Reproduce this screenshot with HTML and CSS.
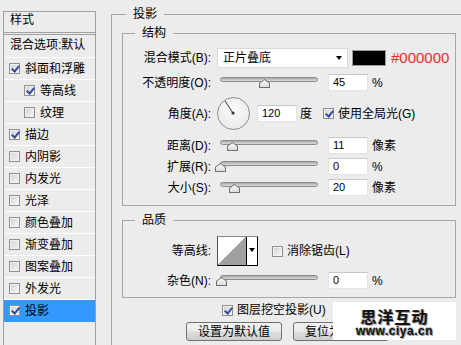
FILE: index.html
```html
<!DOCTYPE html>
<html lang="zh-CN">
<head>
    <meta charset="UTF-8">
    <title>图层样式 - 投影</title>
    <link rel="stylesheet" href="styles.css">
</head>
<body>
    <div class="dialog">
        <aside class="styles-list">
            <div class="list-head">样式</div>
            <div class="list-row blend">混合选项:默认</div>
            <div class="list-row"><span class="cb checked"></span>斜面和浮雕</div>
            <div class="list-row sub"><span class="cb checked"></span>等高线</div>
            <div class="list-row sub"><span class="cb"></span>纹理</div>
            <div class="list-row"><span class="cb checked"></span>描边</div>
            <div class="list-row"><span class="cb"></span>内阴影</div>
            <div class="list-row"><span class="cb"></span>内发光</div>
            <div class="list-row"><span class="cb"></span>光泽</div>
            <div class="list-row"><span class="cb"></span>颜色叠加</div>
            <div class="list-row"><span class="cb"></span>渐变叠加</div>
            <div class="list-row"><span class="cb"></span>图案叠加</div>
            <div class="list-row"><span class="cb"></span>外发光</div>
            <div class="list-row active"><span class="cb checked"></span>投影</div>
        </aside>

        <main class="panel">
            <fieldset class="group outer">
                <legend>投影</legend>

                <fieldset class="group section structure">
                    <legend>结构</legend>

                    <div class="row row-blend">
                        <span class="lbl">混合模式(B):</span>
                        <div class="select">正片叠底<span class="caret"></span></div>
                        <span class="swatch"></span>
                        <span class="hex">#000000</span>
                    </div>

                    <div class="row row-opacity">
                        <span class="lbl">不透明度(O):</span>
                        <div class="slider"><span class="thumb" style="left: 38px"></span></div>
                        <span class="num">45</span>
                        <span class="unit">%</span>
                    </div>

                    <div class="row row-angle">
                        <span class="lbl">角度(A):</span>
                        <div class="dial">
                            <svg width="33" height="33" viewBox="0 0 33 33">
                                <line x1="16" y1="16" x2="8" y2="4" stroke="#333" stroke-width="1"/>
                                <circle cx="16" cy="16" r="1.6" fill="#333"/>
                            </svg>
                        </div>
                        <span class="num angle-num">120</span>
                        <span class="unit">度</span>
                        <span class="check global"><span class="cb checked"></span>使用全局光(G)</span>
                    </div>

                    <div class="row row-distance">
                        <span class="lbl">距离(D):</span>
                        <div class="slider"><span class="thumb" style="left: 6px"></span></div>
                        <span class="num">11</span>
                        <span class="unit">像素</span>
                    </div>

                    <div class="row">
                        <span class="lbl">扩展(R):</span>
                        <div class="slider"><span class="thumb" style="left: -6px"></span></div>
                        <span class="num">0</span>
                        <span class="unit">%</span>
                    </div>

                    <div class="row">
                        <span class="lbl">大小(S):</span>
                        <div class="slider"><span class="thumb" style="left: 8px"></span></div>
                        <span class="num">20</span>
                        <span class="unit">像素</span>
                    </div>
                </fieldset>

                <fieldset class="group section quality">
                    <legend>品质</legend>

                    <div class="row row-contour">
                        <span class="lbl">等高线:</span>
                        <div class="contour">
                            <span class="curve"></span>
                            <span class="drop"><span class="caret"></span></span>
                        </div>
                        <span class="check antialias"><span class="cb"></span>消除锯齿(L)</span>
                    </div>

                    <div class="row row-noise">
                        <span class="lbl">杂色(N):</span>
                        <div class="slider"><span class="thumb" style="left: -5px"></span></div>
                        <span class="num">0</span>
                        <span class="unit">%</span>
                    </div>
                </fieldset>

                <div class="check knockout"><span class="cb checked"></span>图层挖空投影(U)</div>

                <div class="buttons">
                    <button class="btn">设置为默认值</button>
                    <button class="btn">复位为默认值</button>
                </div>
            </fieldset>
        </main>

        <div class="watermark">
            <div class="wm-title">思洋互动</div>
            <div class="wm-url">www.ciya.cn</div>
        </div>
    </div>
</body>
</html>
```

FILE: styles.css
```css
* {
    margin: 0;
    padding: 0;
    box-sizing: border-box;
}

body {
    width: 461px;
    height: 345px;
    overflow: hidden;
    background: #ececec;
    font-family: "Liberation Sans", "Noto Sans CJK SC", sans-serif;
    font-size: 12px;
    line-height: 16px;
    color: #000;
}

.dialog {
    position: relative;
    display: flex;
    align-items: flex-start;
    height: 345px;
}

/* left list of styles */
.styles-list {
    flex: none;
    width: 93px;
    height: 400px;
    margin: 11px 0 0 3px;
    border: 1px solid #a0a0a0;
}

.list-head {
    height: 23px;
    padding-left: 6px;
    border-bottom: 3px double #a0a0a0;
}

.list-row {
    display: flex;
    align-items: center;
    height: 22px;
    padding-left: 5px;
    border-bottom: 1px solid #fff;
    white-space: nowrap;
}

.list-row.blend {
    height: 23px;
    padding: 0 0 2px 6px;
}

.list-row.sub {
    padding-left: 20px;
}

.list-row.active {
    background: #3399ff;
    border-bottom-color: #3399ff;
}

.list-row .cb {
    margin-right: 5px;
}

/* checkbox */
.cb {
    position: relative;
    display: inline-block;
    flex: none;
    width: 11px;
    height: 11px;
    border: 1px solid #8e8f8f;
    background: linear-gradient(135deg, #cfcfcf, #f8f8f8);
    box-shadow: inset 0 0 0 1px #f2f2f2;
}

.cb.checked::after {
    content: "";
    position: absolute;
    left: 3px;
    top: 0;
    width: 3px;
    height: 6px;
    border: solid #2f4a9e;
    border-width: 0 2px 2px 0;
    transform: rotate(40deg);
}

.check {
    display: flex;
    align-items: center;
    white-space: nowrap;
}

.check .cb {
    margin-right: 4px;
}

/* right panel */
.panel {
    flex: none;
    margin: 6px 0 0 15px;
}

.group {
    border: 1px solid #a5a5a5;
    min-width: 0;
}

.group > legend {
    margin-left: 12px;
    padding: 0 7px;
    line-height: 16px;
}

.outer {
    width: 360px;
    padding: 3px 0 30px 10px;
}

.outer > legend {
    margin-left: 4px;
}

.section {
    width: 334px;
}

.structure {
    padding: 7px 0 9px;
}

.quality {
    margin-top: 6px;
    padding: 8px 0 8px;
}

.row {
    display: flex;
    align-items: center;
    height: 17px;
    margin-top: 4px;
    white-space: nowrap;
}

.row-blend {
    height: 20px;
    margin-top: 0;
}

.row-opacity {
    margin-top: 6px;
}

.row-angle {
    height: 33px;
    margin-top: 6px;
}

.row-distance {
    margin-top: 7px;
}

.row-contour {
    height: 30px;
    margin-top: 0;
}

.row-noise {
    margin-top: 6px;
}

.lbl {
    flex: none;
    width: 88px;
    margin-right: 6px;
    text-align: right;
}

/* blend mode */
.select {
    display: flex;
    align-items: center;
    justify-content: space-between;
    width: 131px;
    height: 20px;
    padding: 0 5px 0 5px;
    background: #fff;
    border: 1px solid #d9d9d9;
}

.caret {
    width: 0;
    height: 0;
    border-left: 3.5px solid transparent;
    border-right: 3.5px solid transparent;
    border-top: 4px solid #000;
}

.swatch {
    width: 34px;
    height: 16px;
    margin-left: 4px;
    background: #000;
    border: 1px solid #9a9a9a;
}

.hex {
    margin-left: 5px;
    color: #f22b2b;
    font-size: 15px;
}

/* sliders */
.slider {
    position: relative;
    flex: none;
    width: 98px;
    height: 5px;
    margin: 0 0 6px 3px;
    border: 1px solid #8c8c8c;
    border-radius: 3px;
    background: linear-gradient(#a9a9a9, #dcdcdc);
}

.thumb {
    position: absolute;
    top: 1px;
    width: 11px;
    height: 9px;
    background: #6f6f6f;
    clip-path: polygon(50% 0, 100% 45%, 100% 100%, 0 100%, 0 45%);
}

.thumb::after {
    content: "";
    position: absolute;
    inset: 1px;
    background: linear-gradient(#fafafa, #dcdcdc);
    clip-path: polygon(50% 0, 100% 45%, 100% 100%, 0 100%, 0 45%);
}

.num {
    flex: none;
    width: 40px;
    height: 17px;
    margin-left: 10px;
    padding-left: 4px;
    background: #fff;
    border: 1px solid #e0e3e8;
    border-top-color: #c4c8ce;
    font-size: 11px;
    line-height: 15px;
}

.unit {
    margin-left: 4px;
}

/* angle */
.dial {
    flex: none;
    width: 33px;
    height: 33px;
    border: 1px solid #8c8c8c;
    border-radius: 50%;
    background: radial-gradient(circle at 50% 40%, #fbfbfb, #e4e4e4);
}

.dial svg {
    display: block;
    margin: -1px 0 0 -1px;
}

.num.angle-num {
    margin-left: 7px;
}

.row-angle .unit {
    margin-left: 3px;
}

.global {
    margin-left: 11px;
}

/* quality */
.contour {
    display: flex;
    width: 41px;
    height: 30px;
    border: 1px solid #000;
    border-top-color: #8a8a8a;
    border-left-color: #555;
}

.curve {
    width: 29px;
    border-right: 1px solid #000;
    background: linear-gradient(to top left, #a0a0a0 50%, #fff 50%);
}

.drop {
    flex: 1;
    display: flex;
    justify-content: center;
    padding-top: 11px;
    background: #fff;
}

.antialias {
    margin-left: 14px;
}

.knockout {
    height: 16px;
    margin: 4px 0 0 100px;
}

.buttons {
    display: flex;
    gap: 11px;
    margin: 4px 0 0 64px;
}

.btn {
    width: 96px;
    height: 19px;
    border: 1px solid #707070;
    border-radius: 3px;
    background: linear-gradient(#f2f2f2 0, #ebebeb 48%, #dddddd 52%, #cfcfcf 100%);
    font-family: inherit;
    font-size: 12px;
    line-height: 16px;
    color: #000;
}

/* watermark */
.watermark {
    position: absolute;
    left: 333px;
    top: 302px;
    width: 123px;
    height: 38px;
    display: flex;
    flex-direction: column;
    align-items: center;
    background: #fff;
}

.wm-title {
    margin-top: 6px;
    font-family: "Noto Sans CJK SC", sans-serif;
    font-weight: 700;
    font-size: 16px;
    line-height: 17px;
    letter-spacing: 1px;
    color: #111;
    text-shadow: 1px 1px 0 #999, -1px 0 0 #bbb;
}

.wm-url {
    margin-top: 1px;
    font-family: "Liberation Sans", sans-serif;
    font-weight: 700;
    font-size: 12px;
    line-height: 11px;
    letter-spacing: 0.5px;
    color: #111;
    text-shadow: 1px 1px 0 #999, -1px 0 0 #bbb, 0 -1px 0 #bbb;
}
```
